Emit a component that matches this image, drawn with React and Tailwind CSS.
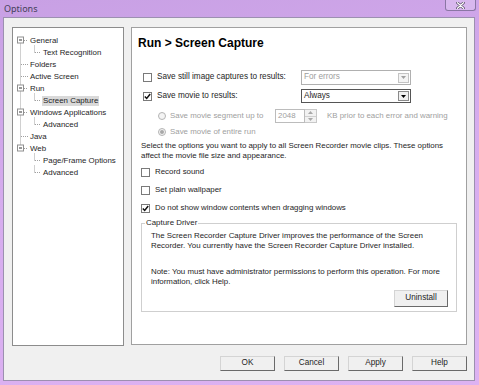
import React from 'react';

// tree rows of the options dialog
const treeRows = [
  { label: 'General', level: 0, box: true },
  { label: 'Text Recognition', level: 1 },
  { label: 'Folders', level: 0 },
  { label: 'Active Screen', level: 0 },
  { label: 'Run', level: 0, box: true },
  { label: 'Screen Capture', level: 1, selected: true },
  { label: 'Windows Applications', level: 0, box: true },
  { label: 'Advanced', level: 1 },
  { label: 'Java', level: 0 },
  { label: 'Web', level: 0, box: true },
  { label: 'Page/Frame Options', level: 1 },
  { label: 'Advanced', level: 1 },
];

function TreeLines() {
  const cy = (i) => 12 + i * 12 + 0.5;
  const lines = [];
  const boxes = [];
  lines.push(<line key="root" x1="7.5" y1={cy(0)} x2="7.5" y2={cy(9)} />);
  treeRows.forEach((r, i) => {
    if (r.level === 0) {
      lines.push(<line key={'h' + i} x1={r.box ? 11 : 8} y1={cy(i)} x2="15" y2={cy(i)} />);
      if (r.box) {
        boxes.push(
          <g key={'b' + i}>
            <rect x="4.5" y={cy(i) - 3.5} width="6" height="6" fill="#fff" stroke="#8f8f8f" />
            <line x1="6" y1={cy(i) - 0.5} x2="9" y2={cy(i) - 0.5} stroke="#333" />
          </g>
        );
      }
    } else {
      lines.push(<line key={'v' + i} x1="21.5" y1={cy(i) - 7} x2="21.5" y2={cy(i)} />);
      lines.push(<line key={'c' + i} x1="22" y1={cy(i)} x2="28" y2={cy(i)} />);
    }
  });
  return (
    <svg className="absolute inset-0 pointer-events-none" width="110" height="317">
      <g stroke="#a0a0a0" strokeDasharray="1 1" fill="none">{lines}</g>
      {boxes}
    </svg>
  );
}

function Check({ checked }) {
  return (
    <span className="w-[9px] h-[9px] border border-[#7a7a7a] bg-white flex items-center justify-center shrink-0">
      {checked && (
        <svg width="7" height="7" viewBox="0 0 7 7">
          <path d="M0.8 3.4 L2.7 5.4 L6.2 1" stroke="#111" strokeWidth="1.5" fill="none" />
        </svg>
      )}
    </span>
  );
}

function Radio({ checked }) {
  return (
    <span className="w-[8px] h-[8px] rounded-full border border-[#b4b4b4] bg-[#f4f4f4] flex items-center justify-center shrink-0">
      {checked && <span className="w-[4px] h-[4px] rounded-full bg-[#a8a8a8]" />}
    </span>
  );
}

function Select({ value, disabled }) {
  return (
    <div
      className={`w-[110px] h-full border flex items-center bg-white ${
        disabled ? 'border-[#b0b0b0] text-[#9d9d9d]' : 'border-[#555] text-[#1e1e1e]'
      }`}
    >
      <span className="flex-1 pl-[2px]">{value}</span>
      <span
        className={`w-[11px] h-[10px] mr-[1px] border flex items-center justify-center ${
          disabled ? 'border-[#c4c4c4] bg-[#f4f4f4]' : 'border-[#8a8a8a] bg-[#f0f0f0]'
        }`}
      >
        <svg width="5" height="3" viewBox="0 0 5 3">
          <path d="M0 0 H5 L2.5 3 Z" fill={disabled ? '#a0a0a0' : '#000'} />
        </svg>
      </span>
    </div>
  );
}

function Spin() {
  return (
    <div className="flex h-full">
      <div className="w-[30px] h-full border border-[#bcbcbc] bg-white flex items-center pl-[2px] text-[#a0a0a0]">
        2048
      </div>
      <div className="w-[12px] h-full flex flex-col border border-l-0 border-[#c8c8c8] bg-[#f2f2f2]">
        <span className="flex-1 flex items-center justify-center border-b border-[#d0d0d0]">
          <svg width="5" height="3" viewBox="0 0 5 3">
            <path d="M0 3 H5 L2.5 0 Z" fill="#a8a8a8" />
          </svg>
        </span>
        <span className="flex-1 flex items-center justify-center">
          <svg width="5" height="3" viewBox="0 0 5 3">
            <path d="M0 0 H5 L2.5 3 Z" fill="#a8a8a8" />
          </svg>
        </span>
      </div>
    </div>
  );
}

function Btn({ children, className = '' }) {
  return (
    <button
      className={`h-[15px] bg-[#f0f0f0] border border-[#d4d4d4] border-r-[#6a6a6a] border-b-[#6a6a6a] leading-none text-[8.2px] text-[#1e1e1e] ${className}`}
    >
      {children}
    </button>
  );
}

export default function App() {
  return (
    <div className="relative w-[479px] h-[385px] flex flex-col bg-[linear-gradient(170deg,#c8a0e4_0%,#d6acee_45%,#ddb2f2_100%)] font-['Liberation_Sans',Arial,sans-serif] text-[7.9px] text-[#1e1e1e] overflow-hidden">
      {/* title bar */}
      <div className="h-[17px] pl-[4px] flex items-center font-['Noto_Sans',sans-serif] text-[9px] text-[#45405a]">
        Options
      </div>
      <div className="absolute top-0 right-[3px] w-[31px] h-[11px] rounded-b-[3px] border border-t-0 border-[#8a76a4] bg-[#d8b8ee] flex items-center justify-center">
        <svg width="9" height="7" viewBox="0 0 9 7">
          <path d="M1.5 0.8 L7.5 6.2 M7.5 0.8 L1.5 6.2" stroke="#4a4058" strokeWidth="2.6" strokeLinecap="round" />
          <path d="M1.5 0.8 L7.5 6.2 M7.5 0.8 L1.5 6.2" stroke="#fff" strokeWidth="1.3" strokeLinecap="round" />
        </svg>
      </div>

      {/* client area */}
      <div className="ml-[3px] w-[472px] h-[364px] border border-[#9c90b0] bg-[#f0f0f0] pt-[9px] pl-[8px] flex flex-col">
        <div className="flex gap-[7px]">
          {/* tree */}
          <div className="relative w-[112px] h-[319px] border border-[#8c8c8c] bg-white">
            <TreeLines />
            <div className="relative pt-[7px] flex flex-col">
              {treeRows.map((r, i) => (
                <div
                  key={i}
                  className={`h-[12px] flex items-center ${r.level === 0 ? 'pl-[16px]' : 'pl-[29px]'}`}
                >
                  <span className={`px-[1px] leading-[10px] ${r.selected ? 'bg-[#d9d9d9]' : ''}`}>{r.label}</span>
                </div>
              ))}
            </div>
          </div>

          {/* settings page */}
          <div className="w-[336px] h-[318px] border border-[#a0a0a0] bg-white flex flex-col whitespace-nowrap">
            <div className="mt-[7px] ml-[6px] h-[16px] leading-[16px] text-[12px] font-bold text-black">
              Run &gt; Screen Capture
            </div>

            <div className="mt-[19px] h-[15px] pl-[11px] flex items-center text-[8.2px]">
              <Check />
              <span className="ml-[5px] w-[144px]">Save still image captures to results:</span>
              <Select value="For errors" disabled />
            </div>
            <div className="mt-[4px] h-[14px] pl-[11px] flex items-center text-[8.2px]">
              <Check checked />
              <span className="ml-[5px] w-[144px]">Save movie to results:</span>
              <Select value="Always" />
            </div>

            <div className="mt-[6px] h-[14px] pl-[26px] flex items-center text-[#a0a0a0]">
              <Radio />
              <span className="ml-[4px] w-[105px]">Save movie segment up to</span>
              <Spin />
              <span className="ml-[10px]">KB prior to each error and warning</span>
            </div>
            <div className="mt-[3px] h-[12px] pl-[26px] flex items-center text-[#a0a0a0]">
              <Radio checked />
              <span className="ml-[4px]">Save movie of entire run</span>
            </div>

            <p className="mt-[3px] pl-[9px] leading-[9.5px]">
              Select the options you want to apply to all Screen Recorder movie clips. These options
              <br />
              affect the movie file size and appearance.
            </p>

            <div className="mt-[6px] h-[12px] pl-[9px] flex items-center">
              <Check />
              <span className="ml-[5px]">Record sound</span>
            </div>
            <div className="mt-[6px] h-[12px] pl-[9px] flex items-center">
              <Check />
              <span className="ml-[5px]">Set plain wallpaper</span>
            </div>
            <div className="mt-[6px] h-[12px] pl-[9px] flex items-center">
              <Check checked />
              <span className="ml-[5px]">Do not show window contents when dragging windows</span>
            </div>

            <fieldset className="mt-[4px] ml-[9px] w-[316px] border border-[#cfcfcf] pb-[4px] pr-[8px]">
              <legend className="ml-[3px] px-[1px] leading-[10px]">Capture Driver</legend>
              <div className="pt-[3px] pl-[9px] leading-[10px]">
                <p>
                  The Screen Recorder Capture Driver improves the performance of the Screen
                  <br />
                  Recorder. You currently have the Screen Recorder Capture Driver installed.
                </p>
                <p className="mt-[16px]">
                  Note: You must have administrator permissions to perform this operation. For more
                  <br />
                  information, click Help.
                </p>
              </div>
              <div className="mt-[3px] flex justify-end">
                <Btn className="w-[54px] h-[17px]">Uninstall</Btn>
              </div>
            </fieldset>
          </div>
        </div>

        {/* dialog buttons */}
        <div className="mt-[10px] pr-[7px] flex justify-end gap-[9px]">
          <Btn className="w-[55px]">OK</Btn>
          <Btn className="w-[55px]">Cancel</Btn>
          <Btn className="w-[55px]">Apply</Btn>
          <Btn className="w-[55px]">Help</Btn>
        </div>
      </div>
    </div>
  );
}
